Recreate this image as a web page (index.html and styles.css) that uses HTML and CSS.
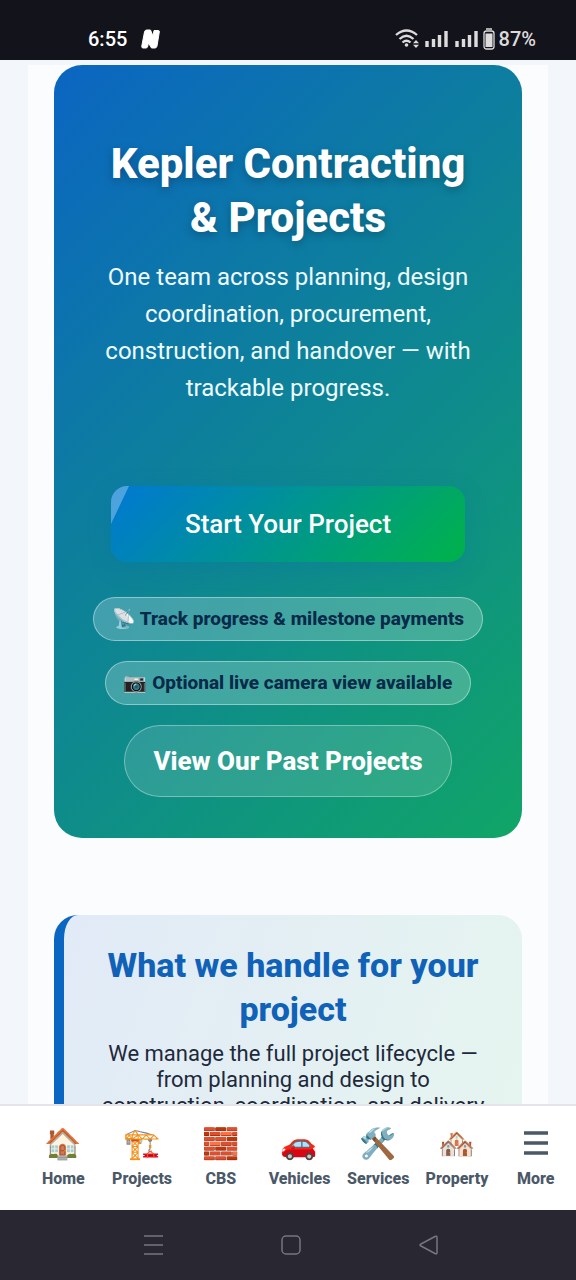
FILE: index.html
```html
<!DOCTYPE html>
<html lang="en">
<head>
    <meta charset="UTF-8">
    <meta name="viewport" content="width=device-width, initial-scale=1.0">
    <title>Kepler Contracting &amp; Projects</title>
    <link rel="stylesheet" href="styles.css">
</head>
<body>
    <header class="status-bar">
        <div class="status-left">
            <span>6:55</span>
            <svg width="19" height="20" viewBox="0 0 19 20">
                <path d="M5.500 1 H9.500 L12 7 L13 1.500 H17.500 Q18.500 1.500 18.300 3 L16 17 Q15.500 19 14 19 H10.500 L7.500 14 L6.500 18 Q6 19 5 19 H2 Q0.500 19 0.800 17 L3.500 3 Q4 1 5.500 1z" fill="#fff" stroke="#fff" stroke-linejoin="round"/>
            </svg>
        </div>
        <div class="status-right">
            <svg width="84" height="22" viewBox="0 0 84 22" fill="none" stroke="#dddbdc">
                <path d="M1 7 Q11.500 -2 22 7 M4.500 11 Q11.500 4.500 18.500 11 M7.500 14.500 Q11.500 11 15.500 14.500" stroke-width="2.300"/>
                <circle cx="11.500" cy="17" r="1.800" fill="#dddbdc" stroke="none"/>
                <path d="M21 12 l3 3.200 h-6z M21 20 l-3 -3.200 h6z" fill="#dddbdc" stroke="none"/>
                <path d="M32 19 V13 M38.500 19 V11 M44.500 19 V7 M51 19 V3 M62 19 V13 M68.500 19 V11 M74.500 19 V7 M81 19 V3" stroke-width="3.400"/>
            </svg>
            <svg width="12" height="22" viewBox="0 0 12 22">
                <path d="M3 1 H9" stroke="#dddbdc" stroke-width="1.500"/>
                <rect x="1" y="3" width="10" height="18" rx="2.500" fill="none" stroke="#dddbdc" stroke-width="1.300"/>
                <rect x="2.500" y="5.500" width="7" height="13.500" fill="#dddbdc"/>
            </svg>
            <span>87%</span>
        </div>
    </header>

    <main class="content">
        <div class="panel">
            <section class="hero">
                <h1>Kepler Contracting &amp; Projects</h1>
                <p>One team across planning, design coordination, procurement, construction, and handover — with trackable progress.</p>
                <button class="start-button">Start Your Project</button>
                <div class="badges">
                    <span class="badge">📡 Track progress &amp; milestone payments</span>
                    <span class="badge">📷 Optional live camera view available</span>
                </div>
                <a href="#" class="past-link">View Our Past Projects</a>
            </section>

            <section class="handle-card">
                <h2>What we handle for your project</h2>
                <p>We manage the full project lifecycle — from planning and design to construction, coordination, and delivery</p>
            </section>
        </div>
    </main>

    <nav class="bottom-nav">
        <a href="#"><span class="icon">🏠</span>Home</a>
        <a href="#"><span class="icon">🏗️</span>Projects</a>
        <a href="#"><span class="icon">🧱</span>CBS</a>
        <a href="#"><span class="icon">🚗</span>Vehicles</a>
        <a href="#"><span class="icon">🛠️</span>Services</a>
        <a href="#"><span class="icon">🏘️</span>Property</a>
        <a href="#"><span class="icon"><svg width="26" height="36" viewBox="0 0 26 36"><path d="M1 7 H25 M1 17 H25 M1 27 H25" stroke="#4a5868" stroke-width="3.500"/></svg></span>More</a>
    </nav>

    <footer class="system-bar">
        <button aria-label="Recent apps"><svg width="22" height="22" viewBox="0 0 22 22"><path d="M2 2 H21 M2 11 H21 M2 20 H21" stroke="#77767f" stroke-width="1.500"/></svg></button>
        <button aria-label="Home screen"><svg width="22" height="22" viewBox="0 0 22 22"><rect x="2" y="2" width="18" height="18" rx="4" fill="none" stroke="#77767f" stroke-width="1.500"/></svg></button>
        <button aria-label="Back"><svg width="22" height="22" viewBox="0 0 22 22"><path d="M17 2.500 Q19 1.500 19 3.500 V18.500 Q19 20.500 17 19.500 L3 12 Q1 11 3 10z" fill="none" stroke="#77767f" stroke-width="1.500"/></svg></button>
    </footer>
</body>
</html>
```
FILE: styles.css
```css
* {
    box-sizing: border-box;
}

body {
    font-family: Roboto, "Noto Color Emoji", sans-serif;
    background-color: #f3f7fc;
    color: #1e293b;
    margin: 0;
    height: 100vh;
    display: flex;
    flex-direction: column;
    overflow: hidden;
}

a {
    color: inherit;
    text-decoration: none;
}

h1,
h2,
p {
    margin: 0;
}

button {
    border: none;
    padding: 0;
    font-family: inherit;
    cursor: pointer;
}

svg {
    display: block;
}

.status-bar {
    flex: none;
    display: flex;
    justify-content: space-between;
    height: 60px;
    padding: 18px 40px 0 88px;
    background-color: #13131b;
    color: #fff;
    font-size: 20px;
    font-weight: 500;
}

.status-left,
.status-right {
    display: flex;
    align-items: center;
}

.status-left {
    gap: 14px;
}

.status-right {
    gap: 4px;
    color: #dddbdc;
}

.content {
    flex: 1;
    min-height: 0;
    padding: 5px 28px 0;
    overflow: hidden;
}

.panel {
    padding: 0 26px;
    background-color: #fbfcfe;
}

.hero {
    display: flex;
    flex-direction: column;
    align-items: center;
    padding: 72px 36px 41px;
    border-radius: 28px;
    background: linear-gradient(135deg, #0b65c2, #10a567);
    color: #fff;
    text-align: center;
}

.hero h1 {
    padding: 0 16px;
    font-size: 42px;
    line-height: 54px;
    font-weight: 800;
    text-shadow: 0 3px 8px rgba(0, 0, 0, 0.25);
}

.hero p {
    margin-top: 14px;
    font-size: 24px;
    line-height: 37px;
    color: #effaff;
}

.start-button {
    position: relative;
    overflow: hidden;
    width: 354px;
    max-width: 100%;
    height: 76px;
    margin-top: 79px;
    border-radius: 16px;
    background: linear-gradient(135deg, #0078d4, #00b050 95%);
    box-shadow: 0 6px 24px rgba(0, 100, 180, 0.2);
    color: #fff;
    font-size: 26px;
    font-weight: 500;
}

/* light sweep in the corner */
.start-button::before {
    content: "";
    position: absolute;
    top: 0;
    left: 0;
    width: 18px;
    height: 38px;
    background: rgba(255, 255, 255, 0.3);
    clip-path: polygon(0 0, 100% 0, 0 100%);
}

.badges {
    display: flex;
    flex-direction: column;
    align-items: center;
    gap: 20px;
    margin: 35px 0 20px;
}

.badge {
    padding: 0 18px;
    border: 1px solid rgba(255, 255, 255, 0.4);
    border-radius: 22px;
    background-color: rgba(255, 255, 255, 0.22);
    color: #0a2a4a;
    font-size: 19px;
    line-height: 42px;
    font-weight: 800;
    white-space: nowrap;
}

.past-link {
    padding: 0 28px;
    border: 1px solid rgba(255, 255, 255, 0.35);
    border-radius: 36px;
    background-color: rgba(255, 255, 255, 0.13);
    font-size: 26px;
    line-height: 70px;
    font-weight: 800;
}

.handle-card {
    margin-top: 77px;
    padding: 28px 30px;
    border-left: 10px solid #0b65c2;
    border-radius: 24px;
    background: linear-gradient(110deg, #e1eaf7, #e6f5ef);
    text-align: center;
}

.handle-card h2 {
    color: #0f62b8;
    font-size: 34px;
    line-height: 44px;
    font-weight: 800;
}

.handle-card p {
    margin-top: 10px;
    font-size: 22px;
    line-height: 26px;
}

.bottom-nav {
    flex: none;
    display: flex;
    height: 106px;
    padding: 20px 1px 0 24px;
    border-top: 2px solid #e3e5e8;
    background-color: #fff;
}

.bottom-nav a {
    flex: 1 1 0;
    display: flex;
    flex-direction: column;
    align-items: center;
    gap: 4px;
    color: #4a5868;
    font-size: 16px;
    line-height: 26px;
    font-weight: 800;
}

.icon {
    height: 36px;
    font-size: 30px;
    line-height: 36px;
}

.system-bar {
    flex: none;
    display: flex;
    justify-content: space-between;
    align-items: center;
    height: 70px;
    padding: 0 136px 0 142px;
    background-color: #292832;
}

.system-bar button {
    background: none;
}
```
